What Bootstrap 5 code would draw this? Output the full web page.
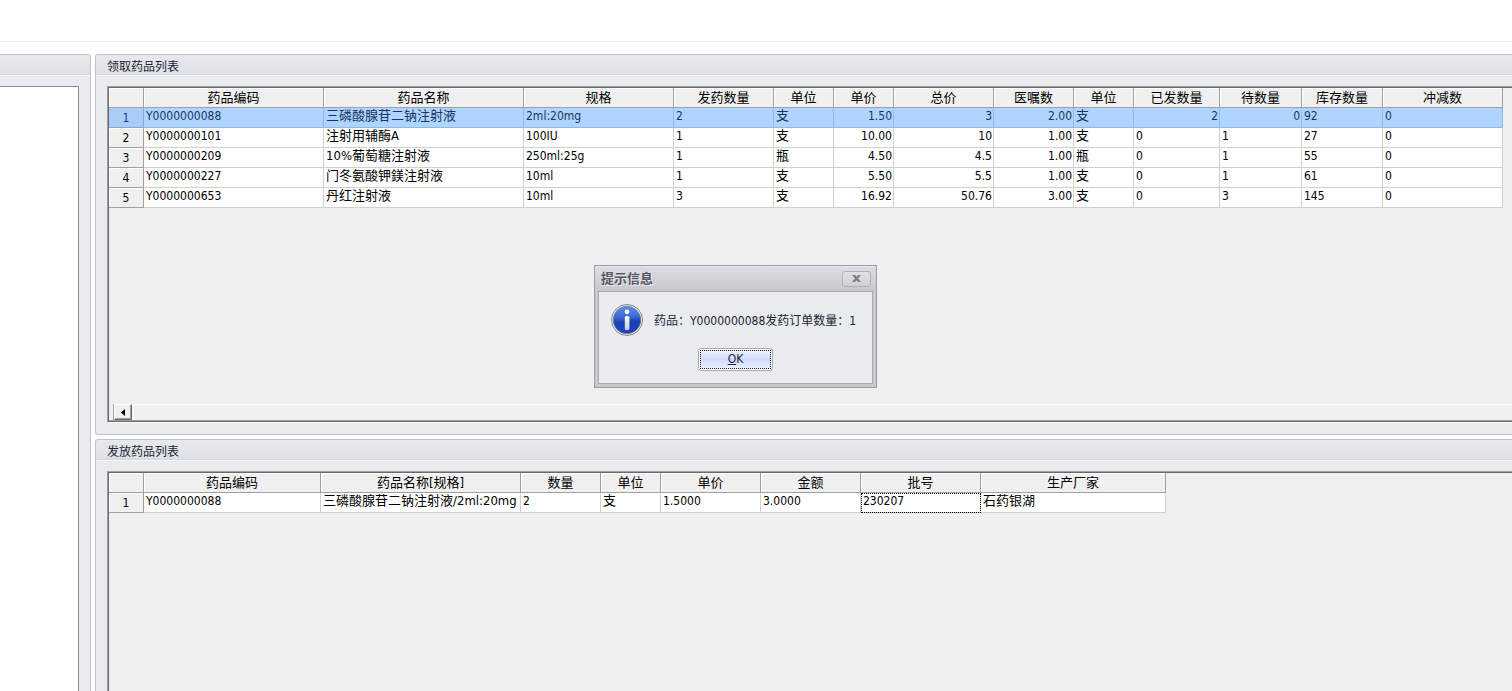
<!DOCTYPE html>
<html lang="zh-CN">
<head>
<meta charset="utf-8">
<meta name="viewport" content="width=device-width, initial-scale=1">
<title>药品发放</title>
<link href="https://cdn.jsdelivr.net/npm/bootstrap@5.3.0/dist/css/bootstrap.min.css" rel="stylesheet">
<style>
body { font: 12px/16px "DejaVu Sans Condensed", "Noto Sans CJK SC", sans-serif; color: #000; background: #fff; }
.top-strip { height: 42px; border-bottom: 1px solid #f0f0f0; }
.pane { background: #eaebef; border: 1px solid #c0c3cb; border-radius: 3px; }
.pane-open-end { border-right: 0; border-top-right-radius: 0; border-bottom-right-radius: 0; }
.pane-open-start { border-left: 0; border-top-left-radius: 0; border-bottom-left-radius: 0; }
.pane-title { height: 21px; padding: 4px 11px 0; font-size: 12px; line-height: 16px; font-weight: 400; margin: 0; color: #201f35;
  background: linear-gradient(#e8e9ed, #dfe0e5); border-bottom: 1px solid #f6f7f9; box-shadow: inset 0 -1px #d6d8dc; border-radius: 2px 2px 0 0; }
.side-pane { width: 91px; }
.side-list { background: #fff; border: 1px solid #868993; border-width: 1px 1px 0 0; margin: 10px 11px 0 0; }
.gridbox { background: #f0f0f0; border: solid #a0a0a0; border-width: 1px 0 0 1px; box-shadow: inset 1px 1px #696969; padding: 1px 0 0 1px; margin: 10px 0 0 11px; }
.gridbox-tall { min-height: 336px; }
.sheet { table-layout: fixed; width: 0; border-collapse: separate; border-spacing: 0; background: #fff; }
.sheet th, .sheet td { height: 20px; padding: 0 1px 3px 2px; line-height: 16px; overflow: hidden; white-space: nowrap; vertical-align: top;
  border: solid #d0d0d0; border-width: 0 1px 1px 0; font-weight: 400; }
.sheet thead th { background: #f0f0f0; border-color: #a0a0a0; box-shadow: inset 1px 1px #fff; text-align: center; font-size: 13px; line-height: 19px; padding: 0; }
.sheet tbody th { background: #f0f0f0; border-color: #a0a0a0; box-shadow: inset 1px 1px #fff; text-align: center; line-height: 17px; padding: 2px 0 0; }
.sheet .zh { font-size: 13px; }
.sheet tr.picked td { background: #afd5ff; border-color: #8fb9e8; color: #17365f; }
.sheet tr.picked th { background: #a8cdf6; border-color: #7fa9da; box-shadow: none; color: #1e3590; }
.sheet td.current { outline: 1px dotted #000; outline-offset: -1px; }
.hscroll { height: 17px; padding-left: 5px; border-bottom: 1px solid #a0a0a0; box-shadow: 0 1px #696969, 0 2px #fff; margin-bottom: 1px; }
.hscroll button { width: 18px; height: 16px; padding: 0; border: 1px solid; border-color: #fff #696969 #696969 #fff; background: #f0f0f0; box-shadow: inset -1px -1px #a0a0a0, -1px 0 #a0a0a0; border-radius: 0; line-height: 0; }
.hscroll .track { border: 1px solid #fff; border-width: 1px 0 0 1px; margin-left: 1px; }
.pane-foot { height: 12px; }
.msgbox { top: 265px; left: 594px; width: 283px; padding: 0 3px 3px; background: #c8c8cf; border: 1px solid #9c9ca7; border-radius: 0; z-index: 10; }
.msgbox-title { height: 25px; margin: 0 -3px; padding: 0 5px 0 6px; background: linear-gradient(#dddde2, #c7c7ce); box-shadow: inset 0 1px #e8e8ec; }
.msgbox-title h2 { font-size: 13px; line-height: 24px; font-weight: 700; margin: 0; color: #555565; text-shadow: 1px 1px #ededf1; }
.msgbox-close { width: 29px; height: 16px; padding: 0; line-height: 0; border: 1px solid #afb0b9; border-radius: 3px; background: linear-gradient(#e0e0e5, #cfcfd5); }
.msgbox-body { background: #eaebef; border: 1px solid #a8a8b1; padding: 12px; color: #201f35; }
.msgbox-text { padding: 2px 0 0 11px; }
.btn-ok { width: 75px; height: 23px; padding: 1px; margin: 12px 0 0; border: 1px solid #a8abb7; border-radius: 3px; background: #fff; color: #201f35; font-size: 12px; line-height: 17px; }
.btn-ok span { display: block; border: 1px dotted #201f35; background: linear-gradient(#eef2ff, #cfdafc 50%, #e9eeff); }
</style>
<script src="https://cdn.jsdelivr.net/npm/bootstrap@5.3.0/dist/js/bootstrap.bundle.min.js"></script>
</head>
<body class="overflow-hidden">
<div class="d-flex flex-column vh-100 position-relative">
  <header class="top-strip flex-shrink-0"></header>
  <main class="d-flex flex-grow-1 pt-2 mt-1">
    <aside class="side-pane pane pane-open-start d-flex flex-column flex-shrink-0 border-bottom-0 rounded-bottom-0">
      <div class="pane-title"></div>
      <div class="side-list flex-grow-1"></div>
    </aside>
    <div class="d-flex flex-column flex-grow-1 gap-1 ms-1 overflow-hidden">
      <section class="pane pane-open-end">
        <h1 class="pane-title">领取药品列表</h1>
        <div class="gridbox gridbox-tall d-flex flex-column">
          <table class="sheet">
            <colgroup><col style="width:35px"><col style="width:180px"><col style="width:200px"><col style="width:150px"><col style="width:100px"><col style="width:60px"><col style="width:60px"><col style="width:100px"><col style="width:80px"><col style="width:60px"><col style="width:86px"><col style="width:82px"><col style="width:81px"><col style="width:120px"></colgroup>
            <thead><tr><th></th><th>药品编码</th><th>药品名称</th><th>规格</th><th>发药数量</th><th>单位</th><th>单价</th><th>总价</th><th>医嘱数</th><th>单位</th><th>已发数量</th><th>待数量</th><th>库存数量</th><th>冲减数</th></tr></thead>
            <tbody>
              <tr class="picked"><th>1</th><td>Y0000000088</td><td class="zh">三磷酸腺苷二钠注射液</td><td>2ml:20mg</td><td>2</td><td class="zh">支</td><td class="text-end">1.50</td><td class="text-end">3</td><td class="text-end">2.00</td><td class="zh">支</td><td class="text-end">2</td><td class="text-end">0</td><td>92</td><td>0</td></tr>
              <tr><th>2</th><td>Y0000000101</td><td class="zh">注射用辅酶A</td><td>100IU</td><td>1</td><td class="zh">支</td><td class="text-end">10.00</td><td class="text-end">10</td><td class="text-end">1.00</td><td class="zh">支</td><td>0</td><td>1</td><td>27</td><td>0</td></tr>
              <tr><th>3</th><td>Y0000000209</td><td class="zh">10%葡萄糖注射液</td><td>250ml:25g</td><td>1</td><td class="zh">瓶</td><td class="text-end">4.50</td><td class="text-end">4.5</td><td class="text-end">1.00</td><td class="zh">瓶</td><td>0</td><td>1</td><td>55</td><td>0</td></tr>
              <tr><th>4</th><td>Y0000000227</td><td class="zh">门冬氨酸钾鎂注射液</td><td>10ml</td><td>1</td><td class="zh">支</td><td class="text-end">5.50</td><td class="text-end">5.5</td><td class="text-end">1.00</td><td class="zh">支</td><td>0</td><td>1</td><td>61</td><td>0</td></tr>
              <tr><th>5</th><td>Y0000000653</td><td class="zh">丹红注射液</td><td>10ml</td><td>3</td><td class="zh">支</td><td class="text-end">16.92</td><td class="text-end">50.76</td><td class="text-end">3.00</td><td class="zh">支</td><td>0</td><td>3</td><td>145</td><td>0</td></tr>
            </tbody>
          </table>
          <div class="hscroll d-flex mt-auto">
            <button type="button" aria-label="向左滚动"><svg width="4" height="7" viewBox="0 0 4 7"><path d="M4 0v7L0 3.500z"/></svg></button>
            <div class="track flex-grow-1"></div>
          </div>
        </div>
        <div class="pane-foot"></div>
      </section>
      <section class="pane pane-open-end border-bottom-0 rounded-bottom-0 d-flex flex-column flex-grow-1">
        <h1 class="pane-title">发放药品列表</h1>
        <div class="gridbox flex-grow-1">
          <table class="sheet">
            <colgroup><col style="width:35px"><col style="width:177px"><col style="width:200px"><col style="width:80px"><col style="width:60px"><col style="width:100px"><col style="width:100px"><col style="width:120px"><col style="width:185px"></colgroup>
            <thead><tr><th></th><th>药品编码</th><th>药品名称[规格]</th><th>数量</th><th>单位</th><th>单价</th><th>金额</th><th>批号</th><th>生产厂家</th></tr></thead>
            <tbody>
              <tr><th>1</th><td>Y0000000088</td><td class="zh">三磷酸腺苷二钠注射液/2ml:20mg</td><td>2</td><td class="zh">支</td><td>1.5000</td><td>3.0000</td><td class="current">230207</td><td class="zh">石药银湖</td></tr>
            </tbody>
          </table>
        </div>
      </section>
    </div>
  </main>
  <div class="msgbox position-absolute" role="dialog" aria-labelledby="msgTitle">
    <div class="msgbox-title d-flex align-items-center justify-content-between">
      <h2 id="msgTitle">提示信息</h2>
      <button type="button" class="msgbox-close" aria-label="关闭"><svg width="9" height="7" viewBox="0 0 9 7"><path d="M0 0h3l1.500 1.800L6 0h3L6 3.500 9 7H6L4.500 5.200 3 7H0l3-3.500z" fill="#7c7d89"/></svg></button>
    </div>
    <div class="msgbox-body">
      <div class="d-flex align-items-center">
        <svg class="flex-shrink-0" width="32" height="32" viewBox="0 0 32 32" aria-hidden="true">
          <defs>
            <linearGradient id="blue" x1="0" y1="0" x2="0" y2="1"><stop offset="0" stop-color="#5d8be4"/><stop offset=".4" stop-color="#2f5fce"/><stop offset=".55" stop-color="#173fb4"/><stop offset="1" stop-color="#2242cc"/></linearGradient>
            <linearGradient id="stem" x1="0" y1="0" x2="0" y2="1"><stop offset="0" stop-color="#fff"/><stop offset="1" stop-color="#c9cdd6"/></linearGradient>
          </defs>
          <circle cx="16" cy="16" r="15.500" fill="#f4f4f4" stroke="#85868a"/>
          <circle cx="16" cy="16" r="13.800" fill="url(#blue)" stroke="#777b86" stroke-width=".8"/>
          <path d="M3 16A13 13 0 0 1 29 13Q20 14 16 16T3 18z" fill="#7ba4f0" opacity=".15"/>
          <circle cx="16" cy="7.800" r="2.400" fill="#fff"/>
          <rect x="13.800" y="12" width="4.600" height="14" rx="1.500" fill="url(#stem)"/>
        </svg>
        <div class="msgbox-text text-nowrap">药品：Y0000000088发药订单数量：1</div>
      </div>
      <div class="text-center"><button type="button" class="btn-ok"><span><u>O</u>K</span></button></div>
    </div>
  </div>
</div>
</body>
</html>
